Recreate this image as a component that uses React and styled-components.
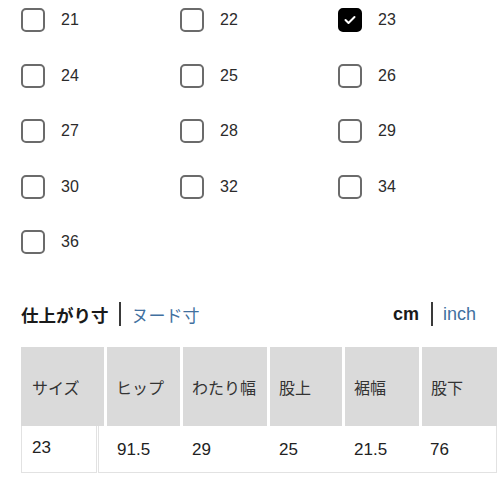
import React from "react";
import styled, { createGlobalStyle } from "styled-components";

const Global = createGlobalStyle`
  html, body { margin: 0; padding: 0; background: #fff; }
  body { font-family: "Liberation Sans", "Noto Sans CJK JP", sans-serif; color: #333; }
`;

const Page = styled.div`
  width: 498px;
  height: 498px;
  box-sizing: border-box;
  padding: 8px 1px 0 21px;
  overflow: hidden;
`;

const OptionGrid = styled.div`
  display: grid;
  grid-template-columns: 159px 158px 1fr;
  grid-auto-rows: 24px;
  row-gap: 31.5px;
`;

const Option = styled.label`
  display: flex;
  align-items: center;
  gap: 16px;
  font-size: 16px;
  color: #2b2b2b;
`;

const Box = styled.span`
  width: 24px;
  height: 24px;
  box-sizing: border-box;
  border-radius: 5px;
  border: 2px solid ${(p) => (p.$checked ? "#000" : "#6b6b6b")};
  background: ${(p) => (p.$checked ? "#000" : "#fff")};
  display: flex;
  align-items: center;
  justify-content: center;
  flex: none;
`;

const HeadRow = styled.div`
  margin-top: 47px;
  height: 26px;
  display: flex;
  align-items: center;
  justify-content: space-between;
  padding-right: 21px;
`;

const Toggle = styled.div`
  display: flex;
  align-items: center;
`;

const Active = styled.span`
  font-weight: bold;
  color: #1a1a1a;
  font-size: ${(p) => (p.$latin ? "18px" : "17.5px")};
`;

const Link = styled.span`
  color: #41709f;
  font-size: ${(p) => (p.$latin ? "18px" : "17px")};
`;

const Divider = styled.span`
  width: 2px;
  height: 24px;
  background: #3a3a3a;
  margin-left: ${(p) => (p.$latin ? "12px" : "10px")};
  margin-right: ${(p) => (p.$latin ? "10px" : "11px")};
`;

const Table = styled.div`
  margin-top: 20px;
  width: 476px;
`;

const HeaderRow = styled.div`
  display: grid;
  grid-template-columns: 83px 73px 84px 72px 74px 1fr;
  column-gap: 3px;
  height: 79px;
`;

const HeaderCell = styled.div`
  background: #dadada;
  display: flex;
  align-items: center;
  padding-left: ${(p) => (p.$first ? "11px" : "9px")};
  font-size: 16px;
  color: #333;
`;

const BodyRow = styled.div`
  display: flex;
  height: 47px;
  gap: 1px;
`;

const SizeCell = styled.div`
  width: 76px;
  box-sizing: border-box;
  border: 1px solid #e2e2e2;
  border-top: none;
  display: flex;
  align-items: center;
  padding-left: 10px;
  padding-bottom: 2px;
  font-size: 17px;
  color: #222;
`;

const ValueGroup = styled.div`
  flex: 1;
  box-sizing: border-box;
  border: 1px solid #e2e2e2;
  border-top: none;
  display: grid;
  grid-template-columns: 84px 87px 75px 76px 1fr;
`;

const ValueCell = styled.div`
  display: flex;
  align-items: center;
  padding-left: ${(p) => (p.$first ? "18px" : "9px")};
  padding-top: 2px;
  font-size: 17px;
  color: #222;
`;

const sizes = ["21", "22", "23", "24", "25", "26", "27", "28", "29", "30", "32", "34", "36"];
const headers = ["サイズ", "ヒップ", "わたり幅", "股上", "裾幅", "股下"];
const values = ["91.5", "29", "25", "21.5", "76"];

const Check = () => (
  <svg width="12" height="10" viewBox="0 0 12 10">
    <polyline points="1.5,5 4.5,8 10.5,2" fill="none" stroke="#fff" strokeWidth="2" strokeLinecap="round" strokeLinejoin="round" />
  </svg>
);

export default function App() {
  return (
    <>
      <Global />
      <Page>
        <OptionGrid>
          {sizes.map((s) => (
            <Option key={s}>
              <Box $checked={s === "23"}>{s === "23" && <Check />}</Box>
              {s}
            </Option>
          ))}
        </OptionGrid>
        <HeadRow>
          <Toggle>
            <Active>仕上がり寸</Active>
            <Divider />
            <Link>ヌード寸</Link>
          </Toggle>
          <Toggle>
            <Active $latin>cm</Active>
            <Divider $latin />
            <Link $latin>inch</Link>
          </Toggle>
        </HeadRow>
        <Table>
          <HeaderRow>
            {headers.map((h, i) => (
              <HeaderCell key={h} $first={i === 0}>{h}</HeaderCell>
            ))}
          </HeaderRow>
          <BodyRow>
            <SizeCell>23</SizeCell>
            <ValueGroup>
              {values.map((v, i) => (
                <ValueCell key={i} $first={i === 0}>{v}</ValueCell>
              ))}
            </ValueGroup>
          </BodyRow>
        </Table>
      </Page>
    </>
  );
}
